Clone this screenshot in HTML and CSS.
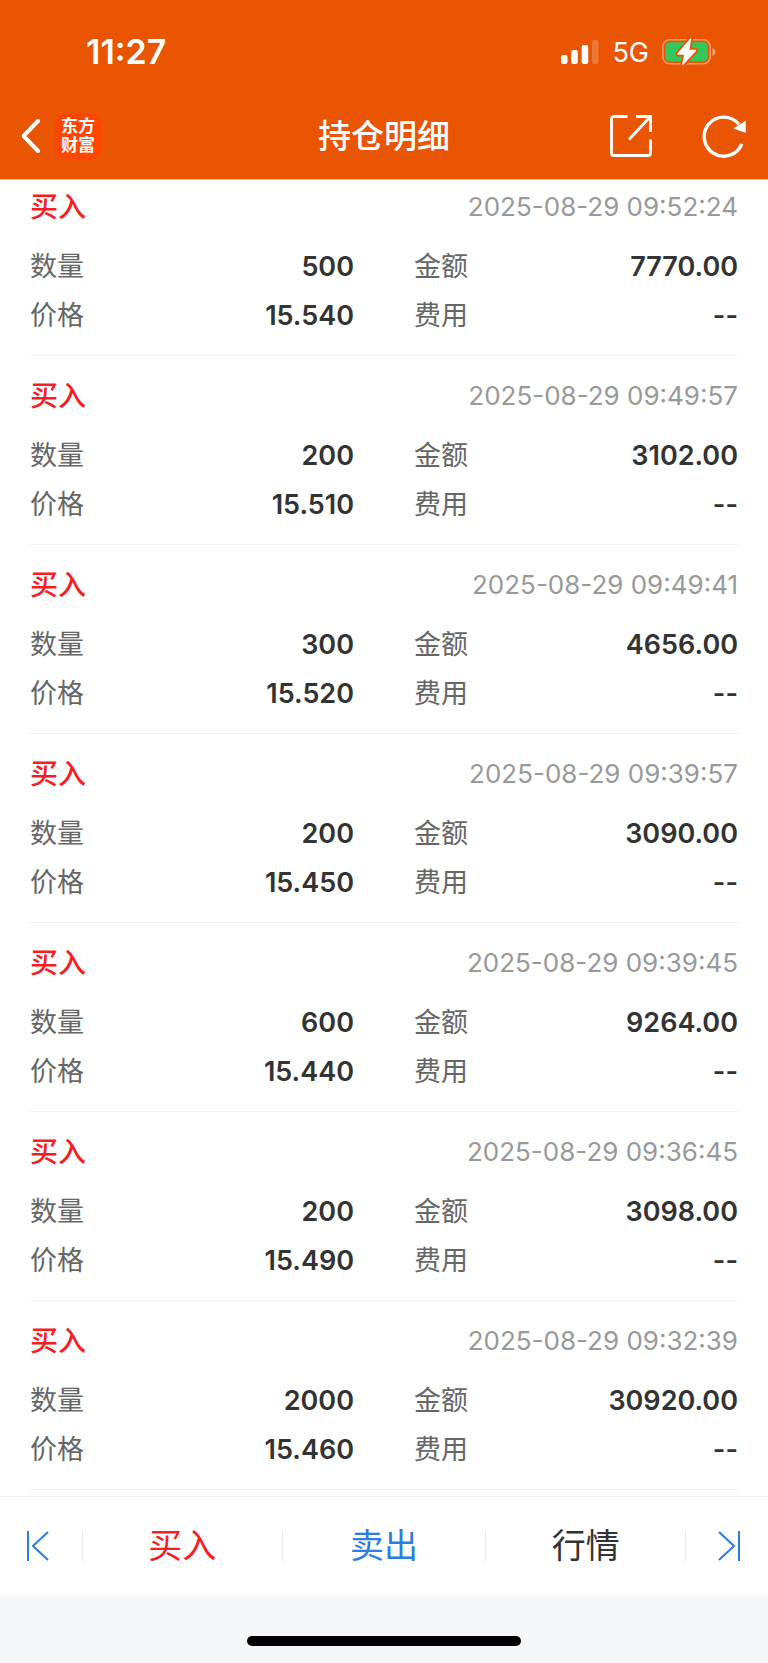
FILE: index.html
```html
<!DOCTYPE html>
<html lang="zh-CN">
<head>
<meta charset="utf-8">
<meta name="viewport" content="width=device-width, initial-scale=1">
<title>持仓明细</title>
<link rel="stylesheet" href="styles.css">
</head>
<body>
<header class="header">
  <div class="status">
    <time class="clock">11:27</time>
    <div class="status-right">
      <svg class="signal" viewBox="0 0 40 26" aria-hidden="true">
        <rect x="1" y="16" width="6.500" height="9" rx="2"/>
        <rect x="11.300" y="11" width="6.500" height="14" rx="2"/>
        <rect x="21.700" y="6" width="6.500" height="19" rx="2"/>
        <rect x="32" y="1" width="6.500" height="24" rx="2" opacity=".2"/>
      </svg>
      <span class="network">5G</span>
      <svg class="battery" viewBox="0 0 54 28" aria-hidden="true">
        <rect x=".8" y="1.800" width="47.400" height="24" rx="7" fill="none" stroke="#fff" stroke-opacity=".4" stroke-width="1.600"/>
        <path d="M50.500 10c3.800 1.200 3.800 6.800 0 8z" fill="#fff" fill-opacity=".45"/>
        <rect x="3.200" y="4.200" width="42.600" height="19.200" rx="4.500" fill="#34c759"/>
        <path d="M28 .8 15.500 15.500q-.8 1.300.6 1.300h6L20.200 26q0 1.500 1.200.5L34 13q.8-1.300-.6-1.300h-6L29.200 1.500Q29.200 0 28 .8z" fill="#fff" stroke="#ea5504" stroke-width="3.600" stroke-linejoin="round" paint-order="stroke"/>
      </svg>
    </div>
  </div>
  <nav class="nav">
    <div class="nav-side">
      <button class="icon-button" type="button" aria-label="返回">
        <svg class="back" viewBox="4 0 20 36"><path d="M20 3 5.500 18l14.500 15" fill="none" stroke="#fff" stroke-width="4" stroke-linecap="round" stroke-linejoin="round"/></svg>
      </button>
      <div class="logo"><span>东方</span><span>财富</span></div>
    </div>
    <h1 class="title">持仓明细</h1>
    <div class="nav-side nav-actions">
      <button class="icon-button" type="button" aria-label="分享">
        <svg class="action" viewBox="0 0 44 44"><path d="M18.500 2.500H5a2.500 2.500 0 0 0-2.500 2.500v34A2.500 2.500 0 0 0 5 41.500h34a2.500 2.500 0 0 0 2.500-2.500V25.500M27 2.500h14.500V18M41 3 20 25.500" fill="none" stroke="#fff" stroke-width="2.800"/></svg>
      </button>
      <button class="icon-button" type="button" aria-label="刷新">
        <svg class="action" viewBox="0 0 44 44"><path d="M39.800 30A19.500 19.500 0 1 1 37 10.500" fill="none" stroke="#fff" stroke-width="3.400"/><path d="M43.800 6.500V19L31.500 14.500z" fill="#fff"/></svg>
      </button>
    </div>
  </nav>
</header>

<main class="records">
  <article class="record">
    <div class="record-head"><h2 class="side">买入</h2><time class="date">2025-08-29 09:52:24</time></div>
    <dl class="fields">
      <div class="field"><dt>数量</dt><dd>500</dd></div>
      <div class="field"><dt>金额</dt><dd>7770.00</dd></div>
      <div class="field"><dt>价格</dt><dd>15.540</dd></div>
      <div class="field"><dt>费用</dt><dd>--</dd></div>
    </dl>
  </article>
  <article class="record">
    <div class="record-head"><h2 class="side">买入</h2><time class="date">2025-08-29 09:49:57</time></div>
    <dl class="fields">
      <div class="field"><dt>数量</dt><dd>200</dd></div>
      <div class="field"><dt>金额</dt><dd>3102.00</dd></div>
      <div class="field"><dt>价格</dt><dd>15.510</dd></div>
      <div class="field"><dt>费用</dt><dd>--</dd></div>
    </dl>
  </article>
  <article class="record">
    <div class="record-head"><h2 class="side">买入</h2><time class="date">2025-08-29 09:49:41</time></div>
    <dl class="fields">
      <div class="field"><dt>数量</dt><dd>300</dd></div>
      <div class="field"><dt>金额</dt><dd>4656.00</dd></div>
      <div class="field"><dt>价格</dt><dd>15.520</dd></div>
      <div class="field"><dt>费用</dt><dd>--</dd></div>
    </dl>
  </article>
  <article class="record">
    <div class="record-head"><h2 class="side">买入</h2><time class="date">2025-08-29 09:39:57</time></div>
    <dl class="fields">
      <div class="field"><dt>数量</dt><dd>200</dd></div>
      <div class="field"><dt>金额</dt><dd>3090.00</dd></div>
      <div class="field"><dt>价格</dt><dd>15.450</dd></div>
      <div class="field"><dt>费用</dt><dd>--</dd></div>
    </dl>
  </article>
  <article class="record">
    <div class="record-head"><h2 class="side">买入</h2><time class="date">2025-08-29 09:39:45</time></div>
    <dl class="fields">
      <div class="field"><dt>数量</dt><dd>600</dd></div>
      <div class="field"><dt>金额</dt><dd>9264.00</dd></div>
      <div class="field"><dt>价格</dt><dd>15.440</dd></div>
      <div class="field"><dt>费用</dt><dd>--</dd></div>
    </dl>
  </article>
  <article class="record">
    <div class="record-head"><h2 class="side">买入</h2><time class="date">2025-08-29 09:36:45</time></div>
    <dl class="fields">
      <div class="field"><dt>数量</dt><dd>200</dd></div>
      <div class="field"><dt>金额</dt><dd>3098.00</dd></div>
      <div class="field"><dt>价格</dt><dd>15.490</dd></div>
      <div class="field"><dt>费用</dt><dd>--</dd></div>
    </dl>
  </article>
  <article class="record">
    <div class="record-head"><h2 class="side">买入</h2><time class="date">2025-08-29 09:32:39</time></div>
    <dl class="fields">
      <div class="field"><dt>数量</dt><dd>2000</dd></div>
      <div class="field"><dt>金额</dt><dd>30920.00</dd></div>
      <div class="field"><dt>价格</dt><dd>15.460</dd></div>
      <div class="field"><dt>费用</dt><dd>--</dd></div>
    </dl>
  </article>
</main>

<footer class="toolbar">
  <button class="tool tool-first" type="button" aria-label="上一个">
    <svg class="step" viewBox="0 0 24 32"><path d="M2 1v30M22 2 7 16l15 14" fill="none" stroke="#2a7de1" stroke-width="2"/></svg>
  </button>
  <button class="tool buy" type="button">买入</button>
  <button class="tool sell" type="button">卖出</button>
  <button class="tool" type="button">行情</button>
  <button class="tool tool-last" type="button" aria-label="下一个">
    <svg class="step" viewBox="0 0 24 32"><path d="M22 1v30M2 2l15 14L2 30" fill="none" stroke="#2a7de1" stroke-width="2"/></svg>
  </button>
</footer>
<div class="home-area"><div class="home-indicator"></div></div>
</body>
</html>
```

FILE: styles.css
```css
* {
  box-sizing: border-box;
}

body {
  margin: 0;
  min-height: 100vh;
  display: flex;
  flex-direction: column;
  background: #fff;
  color: #333;
  font-family: Inter, "Noto Sans CJK SC", sans-serif;
  line-height: 1;
}

button {
  margin: 0;
  padding: 0;
  border: 0;
  background: none;
  color: inherit;
  font: inherit;
}

svg {
  display: block;
}

.header {
  background: #ea5504;
  border-bottom: 1px solid #f8bb99;
  color: #fff;
}

.status {
  height: 94px;
  padding: 10px 52px 0 86px;
  display: flex;
  align-items: center;
  justify-content: space-between;
}

.clock {
  font-size: 34px;
  font-weight: 600;
}

.status-right {
  display: flex;
  align-items: center;
}

.signal {
  width: 40px;
  height: 26px;
  fill: #fff;
}

.network {
  margin: 0 13px 0 12px;
  font-size: 27px;
}

.battery {
  width: 54px;
  height: 28px;
}

.nav {
  height: 85px;
  padding: 0 22px 1px;
  display: grid;
  grid-template-columns: 1fr auto 1fr;
  align-items: center;
}

.nav-side {
  display: flex;
  align-items: center;
  gap: 13px;
}

.nav-actions {
  justify-content: flex-end;
  gap: 49px;
}

.back {
  width: 20px;
  height: 36px;
}

.action {
  width: 44px;
  height: 44px;
}

.logo {
  width: 46px;
  height: 46px;
  border-radius: 10px;
  background: #ff4500;
  display: flex;
  flex-direction: column;
  align-items: center;
  justify-content: center;
  font-size: 17px;
  font-weight: 700;
  line-height: 19px;
}

.title {
  margin: 0;
  font-size: 33px;
  font-weight: 500;
}

.records {
  flex: 1;
  padding: 0 30px;
}

.record {
  padding: 21px 0 15px;
  border-bottom: 1px solid #f2f2f2;
}

.record:first-child {
  padding-top: 8px;
}

.record-head {
  height: 38px;
  margin-bottom: 16px;
  display: flex;
  align-items: center;
  justify-content: space-between;
}

.side {
  margin: 0;
  color: #f81d22;
  font-size: 28px;
  font-weight: 500;
}

.date {
  color: #999;
  font-size: 26px;
}

.fields {
  margin: 0;
  display: grid;
  grid-template-columns: 1fr 1fr;
  column-gap: 60px;
}

.field {
  height: 49px;
  display: flex;
  align-items: center;
  justify-content: space-between;
}

.field dt {
  color: #666;
  font-size: 27px;
}

.field dd {
  margin: 0;
  font-size: 27px;
  font-weight: 600;
}

.toolbar {
  height: 99px;
  margin-top: 6px;
  border-top: 1px solid #f0f0f0;
  display: grid;
  grid-template-columns: 83px 49fr 50fr 49fr 82px;
  align-items: center;
}

.tool {
  height: 33px;
  border-right: 1px solid #ececec;
  display: flex;
  align-items: center;
  justify-content: center;
  font-size: 34px;
}

.tool-first {
  justify-content: flex-start;
  padding-left: 26px;
}

.tool-last {
  justify-content: flex-end;
  padding-right: 27px;
  border-right: 0;
}

.buy {
  color: #f81d22;
}

.sell {
  color: #2a7de1;
}

.step {
  width: 24px;
  height: 32px;
}

.home-area {
  height: 68px;
  padding-top: 41px;
  background: #f6f7fa;
}

.home-indicator {
  width: 274px;
  height: 10px;
  margin: 0 auto;
  border-radius: 5px;
  background: #000;
}
```
